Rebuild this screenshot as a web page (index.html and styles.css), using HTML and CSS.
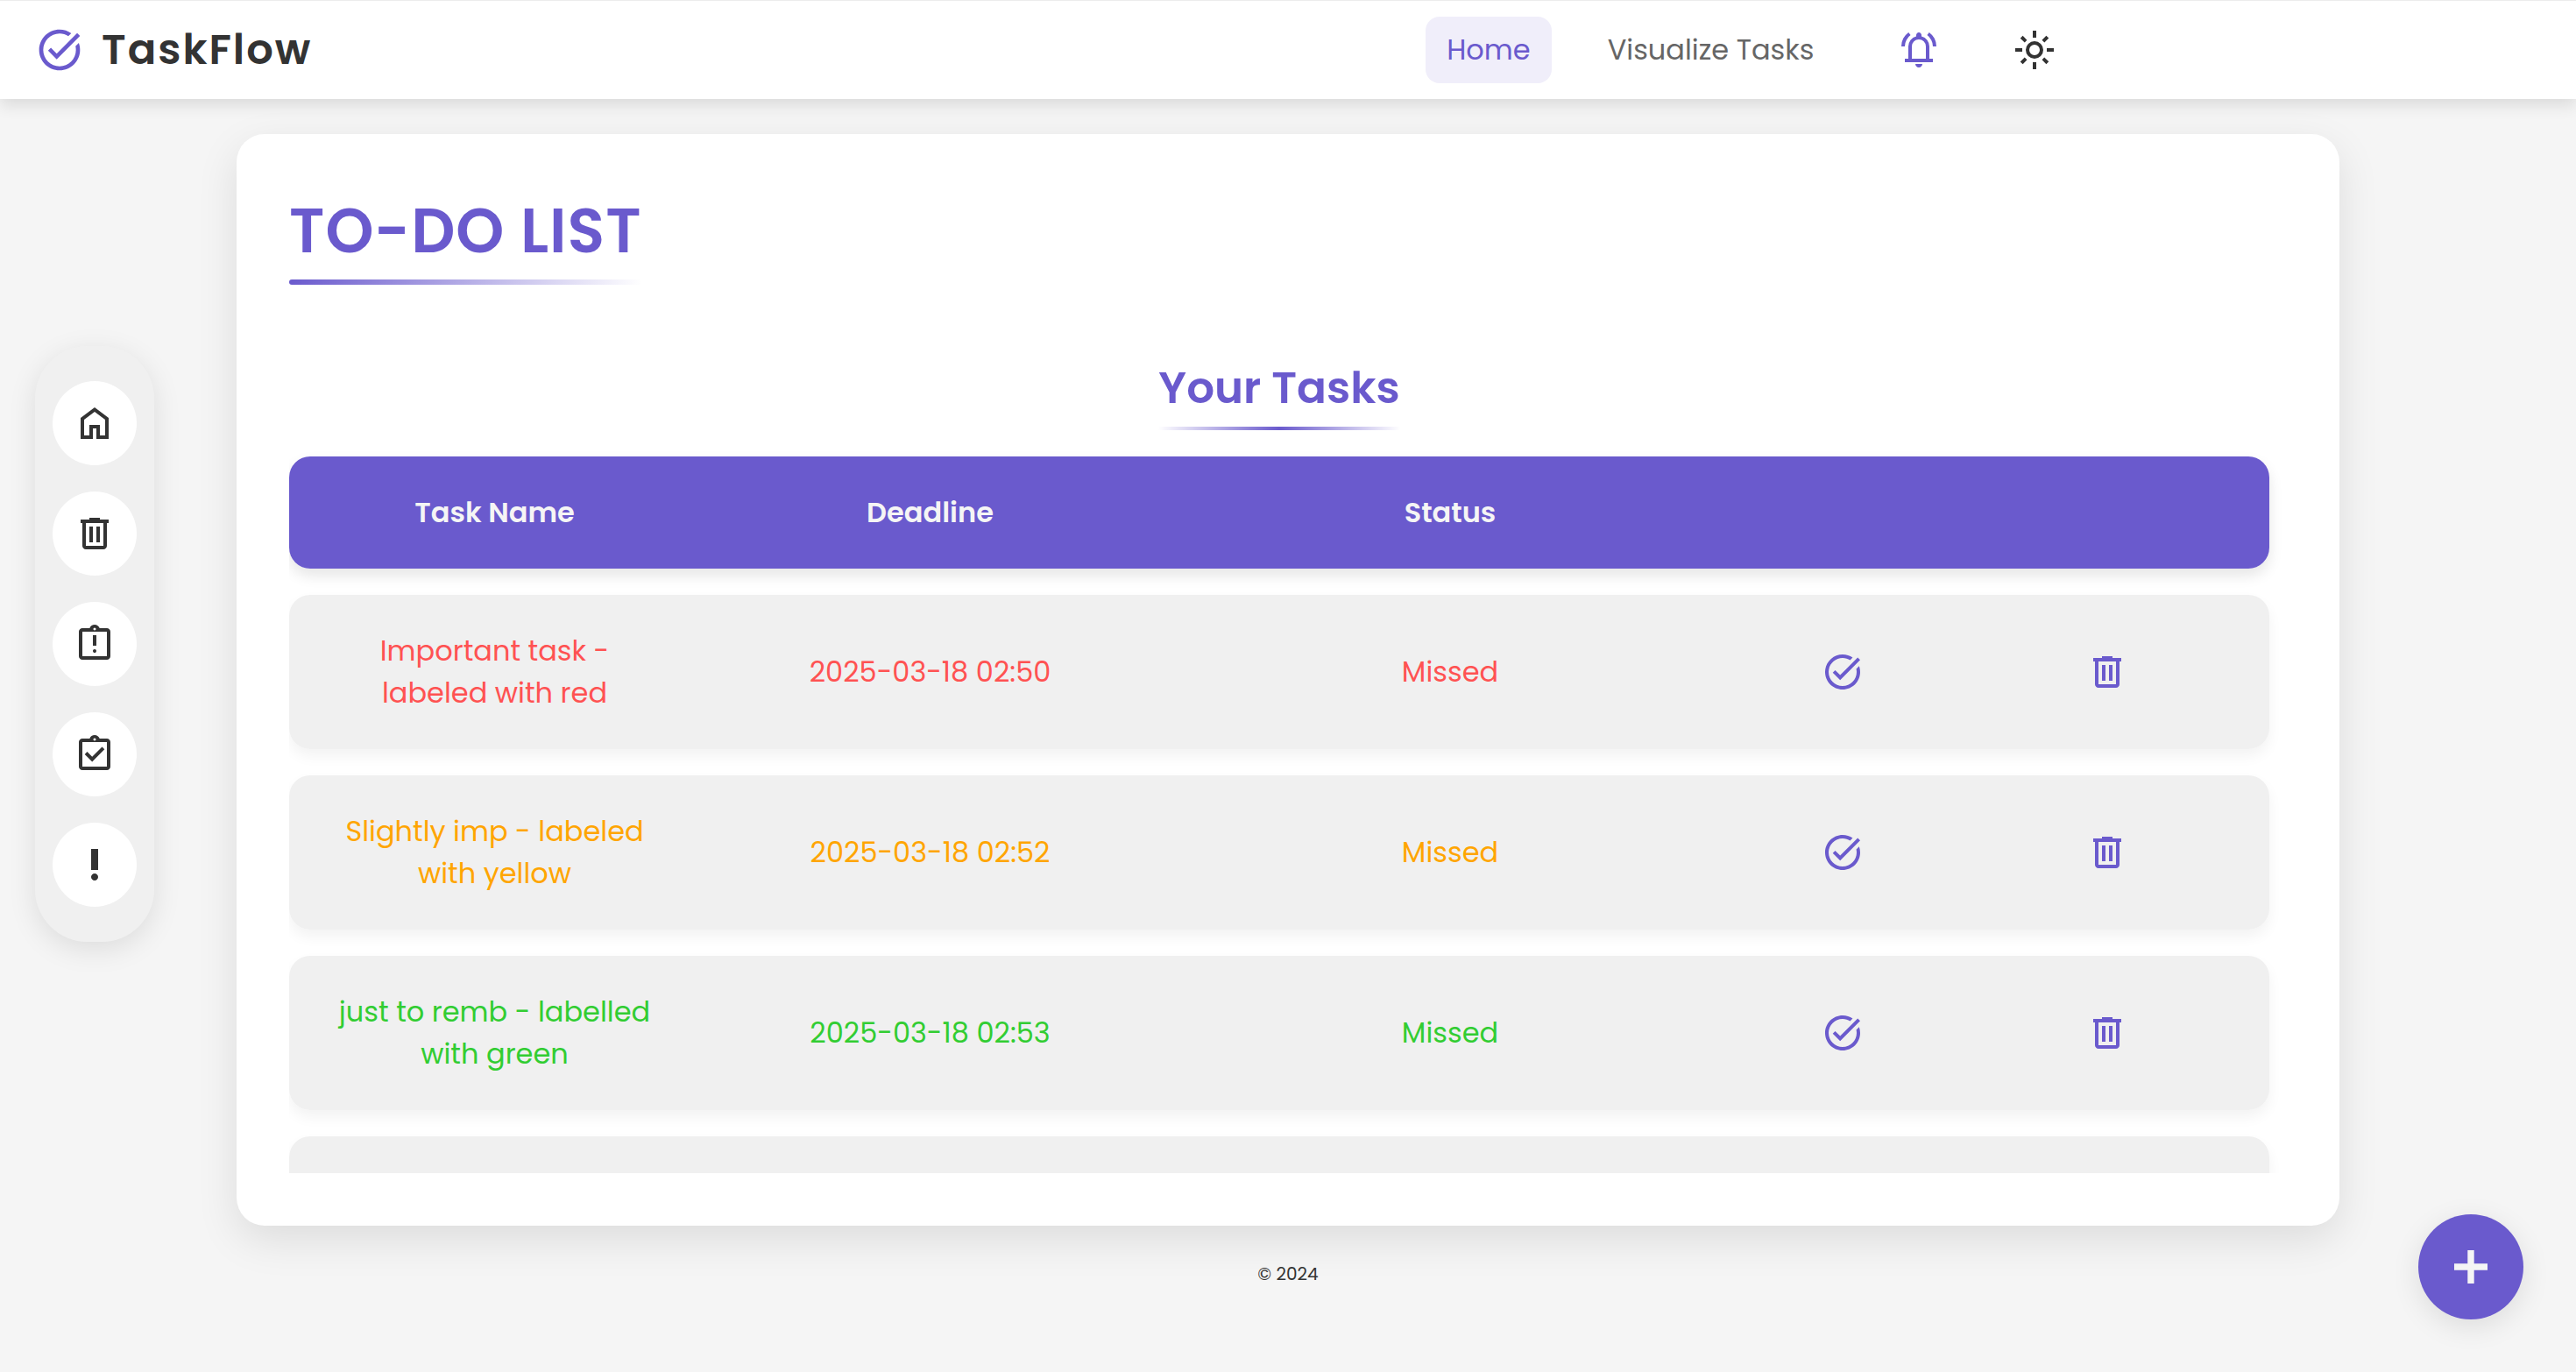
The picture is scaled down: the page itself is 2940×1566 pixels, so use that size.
FILE: index.html
```html
<!DOCTYPE html>
<html lang="en">
<head>
  <meta charset="utf-8">
  <meta name="viewport" content="width=device-width, initial-scale=1">
  <title>TaskFlow</title>
  <link rel="stylesheet" href="styles.css">
</head>
<body>
  <svg class="sprite" aria-hidden="true">
    <symbol id="i-done" viewBox="0 0 24 24"><path d="M22 5.18L10.59 16.6l-4.24-4.24l1.41-1.41l2.83 2.83l10-10L22 5.18zM19.79 10.22C19.92 10.79 20 11.39 20 12c0 4.42-3.58 8-8 8s-8-3.58-8-8c0-4.42 3.58-8 8-8c1.58 0 3.04 .46 4.28 1.25l1.44-1.44C16.1 2.67 14.13 2 12 2C6.48 2 2 6.48 2 12c0 5.52 4.48 10 10 10s10-4.48 10-10c0-1.19-.22-2.33-.6-3.39L19.79 10.22z"/></symbol>
    <symbol id="i-trash" viewBox="0 0 24 24"><path d="M7 21q-.825 0-1.412-.587Q5 19.825 5 19V6H4V4h5V3h6v1h5v2h-1v13q0 .825-.587 1.413Q17.825 21 17 21ZM17 6H7v13h10ZM9 17h2V8H9Zm4 0h2V8h-2Z"/></symbol>
    <symbol id="i-home" viewBox="0 0 24 24"><path d="M6 19h3v-6h6v6h3v-9l-6-4.5L6 10Zm-2 2V9l8-6l8 6v12h-7v-6h-2v6Z"/></symbol>
    <symbol id="i-board" viewBox="0 0 24 24"><path fill-rule="evenodd" d="M5 21q-.825 0-1.413-.587T3 19V5q0-.825.588-1.413T5 3h4.175q.275-.875 1.075-1.438T12 1q1 0 1.788.563T14.85 3H19q.825 0 1.413.588T21 5v14q0 .825-.588 1.413T19 21ZM5 19h14V5H5ZM12 4.25q.325 0 .538-.213t.212-.537t-.213-.537T12 2.75t-.537.213t-.213.537t.213.538t.537.212Z"/></symbol>
    <symbol id="i-bell" viewBox="0 0 24 24"><path d="M2 10q0-2.5 1.113-4.587T6.1 1.95l1.175 1.6q-1.475 1.1-2.375 2.775T4 10zm18 0q0-2-.9-3.675T16.725 3.55l1.175-1.6q1.875 1.375 2.988 3.463T22 10zM4 19v-2h2v-7q0-2.075 1.25-3.687T10.5 4.2v-.7q0-.625.438-1.062T12 2t1.063.438T13.5 3.5v.7q2 .5 3.25 2.113T18 10v7h2v2zm8 3q-.825 0-1.412-.587T10 20h4q0 .825-.587 1.413T12 22m-4-5h8v-7q0-1.65-1.175-2.825T12 6T9.175 7.175T8 10z"/></symbol>
    <symbol id="i-sun" viewBox="0 0 24 24"><path d="M12 15q1.25 0 2.125-.875T15 12t-.875-2.125T12 9t-2.125.875T9 12t.875 2.125T12 15m0 2q-2.075 0-3.537-1.463T7 12t1.463-3.537T12 7t3.538 1.463T17 12t-1.463 3.538T12 17M5 13H1v-2h4zm18 0h-4v-2h4zM11 5V1h2v4zm0 18v-4h2v4zM6.4 7.75L3.875 5.325L5.3 3.85l2.4 2.5zm12.3 12.4l-2.425-2.525L17.6 16.25l2.525 2.425zM16.25 6.4l2.425-2.525L20.15 5.3l-2.5 2.4zM3.85 18.7l2.525-2.425L7.75 17.6l-2.425 2.525z"/></symbol>
  </svg>

  <header class="topbar">
    <div class="brand">
      <svg class="brand-icon" aria-hidden="true"><use href="#i-done"/></svg>
      <span class="brand-name">TaskFlow</span>
    </div>
    <nav class="nav">
      <a class="nav-link active" href="#home">Home</a>
      <a class="nav-link" href="#visualize">Visualize Tasks</a>
      <div class="nav-tools">
        <button class="nav-button accent" type="button" aria-label="Notifications"><svg class="icon"><use href="#i-bell"/></svg></button>
        <button class="nav-button" type="button" aria-label="Toggle theme"><svg class="icon"><use href="#i-sun"/></svg></button>
      </div>
    </nav>
  </header>

  <aside class="rail">
    <button class="rail-button" type="button" aria-label="All tasks"><svg class="icon"><use href="#i-home"/></svg></button>
    <button class="rail-button" type="button" aria-label="Deleted"><svg class="icon"><use href="#i-trash"/></svg></button>
    <button class="rail-button" type="button" aria-label="Missed"><svg class="icon" viewBox="0 0 24 24"><use href="#i-board"/><path d="M12 17q.425 0 .713-.288T13 16t-.288-.713T12 15t-.713.288T11 16t.288.713T12 17m-1-4h2V7h-2z"/></svg></button>
    <button class="rail-button" type="button" aria-label="Completed"><svg class="icon" viewBox="0 0 24 24"><use href="#i-board"/><path d="m10.6 16.2l7.05-7.05l-1.4-1.4l-5.65 5.65l-2.85-2.85l-1.4 1.4z"/></svg></button>
    <button class="rail-button" type="button" aria-label="Important"><svg class="icon" viewBox="0 0 24 24"><path d="M12 21q-.825 0-1.412-.587T10 19t.588-1.412T12 17t1.413.588T14 19t-.587 1.413T12 21m-2-6V3h4v12z"/></svg></button>
  </aside>

  <main class="card">
    <h1 class="title">TO-DO LIST</h1>
    <section class="list">
      <h2 class="subtitle">Your Tasks</h2>
      <table class="tasks">
        <colgroup><col class="col-name"><col class="col-deadline"><col class="col-status"><col class="col-done"><col class="col-delete"></colgroup>
        <thead>
          <tr><th scope="col">Task Name</th><th scope="col">Deadline</th><th scope="col">Status</th><th></th><th></th></tr>
        </thead>
        <tbody>
          <tr class="high">
            <td>Important task -<br>labeled with red</td><td>2025-03-18 02:50</td><td>Missed</td>
            <td><button class="row-button" type="button" aria-label="Complete"><svg class="icon"><use href="#i-done"/></svg></button></td>
            <td><button class="row-button" type="button" aria-label="Delete"><svg class="icon"><use href="#i-trash"/></svg></button></td>
          </tr>
          <tr class="medium">
            <td>Slightly imp - labeled<br>with yellow</td><td>2025-03-18 02:52</td><td>Missed</td>
            <td><button class="row-button" type="button" aria-label="Complete"><svg class="icon"><use href="#i-done"/></svg></button></td>
            <td><button class="row-button" type="button" aria-label="Delete"><svg class="icon"><use href="#i-trash"/></svg></button></td>
          </tr>
          <tr class="low">
            <td>just to remb - labelled<br>with green</td><td>2025-03-18 02:53</td><td>Missed</td>
            <td><button class="row-button" type="button" aria-label="Complete"><svg class="icon"><use href="#i-done"/></svg></button></td>
            <td><button class="row-button" type="button" aria-label="Delete"><svg class="icon"><use href="#i-trash"/></svg></button></td>
          </tr>
          <tr><td></td><td></td><td></td><td></td><td></td></tr>
        </tbody>
      </table>
    </section>
  </main>

  <footer class="footer">© 2024</footer>

  <button class="add" type="button" aria-label="Add task">
    <svg class="add-icon" viewBox="0 0 38 38"><path d="M15.3 0h7.4v15.3H38v7.4H22.7V38h-7.4V22.7H0v-7.4h15.3z"/></svg>
  </button>
</body>
</html>
```
FILE: styles.css
```css
:root {
  --accent: #6a5acd;
  --ink: #333;
  --page: #f5f5f5;
  --soft: #f0f0f0;
}

* { box-sizing: border-box; }

body {
  margin: 0;
  background: var(--page);
  color: var(--ink);
  font-family: Poppins, Inter, "Open Sans", sans-serif;
  font-size: 32px;
  line-height: 48px;
}

button {
  display: inline-flex;
  align-items: center;
  justify-content: center;
  padding: 0;
  border: 0;
  background: none;
  color: inherit;
  font: inherit;
  cursor: pointer;
}

svg { display: block; fill: currentColor; }
.sprite { position: absolute; width: 0; height: 0; }
.icon { width: 48px; height: 48px; }

/* Top bar */
.topbar {
  display: flex;
  align-items: center;
  justify-content: space-between;
  height: 113px;
  padding-left: 40px;
  border-top: 1px solid #ececec;
  background: #fff;
  box-shadow: 0 8px 16px rgba(0, 0, 0, .1);
}

.brand { display: flex; align-items: center; gap: 20px; }
.brand-icon { width: 56px; height: 56px; color: var(--accent); }
.brand-name { font-size: 48px; font-weight: 600; letter-spacing: 2px; }

.nav { display: flex; align-items: center; gap: 40px; margin-right: 19.1vw; }

.nav-link {
  padding: 14px 24px;
  border-radius: 16px;
  color: #666;
  text-decoration: none;
}
.nav-link.active { background: #f0eefa; color: var(--accent); }

.nav-tools { display: flex; gap: 20px; }
.nav-button { width: 112px; height: 76px; }
.nav-button.accent { color: var(--accent); }

/* Floating side rail */
.rail {
  position: fixed;
  top: 395px;
  left: 40px;
  display: flex;
  flex-direction: column;
  gap: 30px;
  padding: 40px 20px;
  border-radius: 60px;
  background: var(--soft);
  box-shadow: 0 8px 32px rgba(0, 0, 0, .1);
}
.rail-button { width: 96px; height: 96px; border-radius: 50%; background: #fff; }

/* Card */
.card {
  margin: 40px 270px 0;
  padding: 60px;
  border-radius: 32px;
  background: #fff;
  box-shadow: 0 16px 48px rgba(0, 0, 0, .1);
}

.title {
  width: fit-content;
  margin: 0 0 74px;
  color: var(--accent);
  font-size: 70px;
  font-weight: 600;
  line-height: 102px;
  letter-spacing: 1px;
}
.title::after {
  content: "";
  display: block;
  height: 6px;
  margin-top: 4px;
  border-radius: 3px;
  background: linear-gradient(90deg, var(--accent), transparent);
}

.list {
  height: 60vh;
  padding-right: 20px;
  overflow-y: auto;
  scrollbar-width: none;
}

.subtitle {
  width: fit-content;
  margin: 0 auto;
  color: var(--accent);
  font-size: 50px;
  font-weight: 600;
  line-height: 88px;
}
.subtitle::after {
  content: "";
  display: block;
  height: 4px;
  background: linear-gradient(90deg, transparent, var(--accent), transparent);
}

.tasks {
  width: 100%;
  table-layout: fixed;
  border-collapse: separate;
  border-spacing: 0 30px;
  text-align: center;
}
.col-name { width: 469px; }
.col-deadline { width: 525px; }
.col-status { width: 662px; }
.col-done { width: 234px; }
.col-delete { width: 370px; }

.tasks tr { border-radius: 24px; box-shadow: 0 8px 16px rgba(0, 0, 0, .05); }
.tasks thead tr { box-shadow: 0 8px 16px rgba(0, 0, 0, .1); }
.tasks th, .tasks td { padding: 40px 0; background: var(--soft); }
.tasks th { background: var(--accent); color: var(--page); font-weight: 600; }
.tasks td { height: 176px; }
.tasks tr > :first-child { border-radius: 24px 0 0 24px; }
.tasks tr > :last-child { border-radius: 0 24px 24px 0; }

.high { color: #ff5252; }
.medium { color: #ffa500; }
.low { color: #32cd32; }
.row-button { display: flex; margin: 0 auto; color: var(--accent); }

.footer {
  padding-top: 40px;
  color: #333;
  font-size: 20px;
  line-height: 30px;
  text-align: center;
}

/* Floating add button */
.add {
  position: fixed;
  right: 60px;
  bottom: 60px;
  width: 120px;
  height: 120px;
  border-radius: 50%;
  background: var(--accent);
  color: var(--page);
  box-shadow: 0 8px 32px rgba(0, 0, 0, .1);
}
.add-icon { width: 38px; height: 38px; }
```
